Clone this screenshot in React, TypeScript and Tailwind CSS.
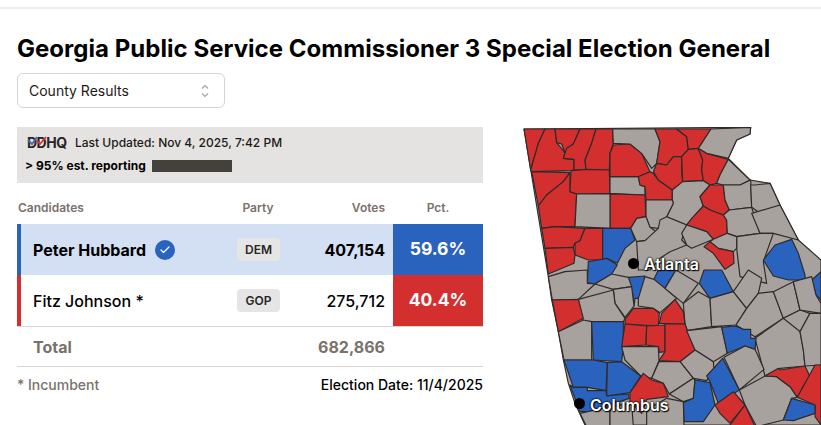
import { Check } from "lucide-react";

const RED = "#d32f2f";
const BLUE = "#2a63bd";
const GRAY = "#a8a29e";

// county shapes, traced in 3x picture units
const upper: [string, string][] = [
  [RED, "42,27 105,27 85,70 62,150"],
  [RED, "105,27 135,27 140,68 165,98 160,115 192,118 192,150 183,152 65,155 62,150 85,70"],
  [RED, "135,27 210,27 190,72 165,98 155,72 140,68"],
  [RED, "210,27 258,27 245,70 225,120 228,148 192,150 192,118 160,115 170,85 190,72"],
  [RED, "258,27 308,27 310,70 300,100 298,150 228,148 225,120 245,70"],
  [RED, "65,155 180,158 160,185 110,225 85,258"],
  [RED, "180,158 180,215 200,222 195,320 135,320 95,325 85,258 110,225 160,185"],
  [RED, "183,152 228,148 298,150 300,220 200,222 180,215"],
  [GRAY, "300,170 385,170 390,195 405,200 405,225 300,220"],
  [RED, "300,222 405,225 408,290 380,295 362,325 300,325"],
  [GRAY, "200,222 300,222 300,325 195,320"],
  [RED, "310,75 360,72 395,100 415,145 420,155 385,170 300,170 300,100"],
  [RED, "385,170 420,155 430,160 445,180 487,210 487,240 408,240 405,200 390,195"],
  [GRAY, "308,27 435,27 450,65 440,130 425,145 395,100 360,72 310,70"],
  [RED, "435,27 500,27 530,50 535,88 515,110 490,110 470,135 440,130 450,65"],
  [RED, "500,27 603,27 575,70 565,85 535,88 530,50"],
  [RED, "470,135 490,110 515,110 515,160 518,185 487,210 445,180 430,155 440,130"],
  [RED, "535,88 565,85 578,120 575,150 580,182 518,185 515,110"],
  [RED, "565,85 590,100 655,118 630,165 620,190 600,195 580,182 575,150 578,120"],
  [GRAY, "603,27 722,22 720,42 680,60 655,115 590,100 565,85 575,70"],
  [GRAY, "487,210 518,185 580,182 600,195 570,230 580,258 530,315 470,290 490,250 487,240"],
  [RED, "600,195 640,195 645,240 658,270 640,285 600,270 580,258 570,230"],
  [RED, "580,258 600,270 640,285 650,300 652,340 610,358 590,335 530,315 545,295"],
  [RED, "95,325 135,320 225,325 210,362 195,370 190,382 105,385"],
  [RED, "225,325 278,325 278,420 235,420 195,405 195,370 210,362"],
  [RED, "105,385 190,382 195,405 192,430 115,462"],
  [BLUE, "278,325 362,325 375,360 345,385 322,430 290,415 278,420"],
  [GRAY, "408,240 487,240 490,250 470,290 445,325 420,322 408,290"],
  [GRAY, "655,118 720,180 690,195 640,195 620,190 630,165"],
  [GRAY, "640,195 690,195 722,180 725,262 658,270 645,240"],
  [GRAY, "722,195 735,195 780,190 810,255 750,280 725,262"],
  [GRAY, "640,285 658,270 725,262 750,340 680,350 652,340 650,300"],
  [GRAY, "725,280 810,255 865,360 790,340 750,340"],
  [GRAY, "680,350 750,340 790,340 760,425 770,490 690,470 680,385"],
  [GRAY, "362,325 380,295 408,290 420,322 445,340 405,362 380,365"],
  [GRAY, "380,365 405,362 445,325 450,300 470,290 530,315 515,360 530,375 480,395 450,415 420,450 385,450"],
  [GRAY, "515,340 530,315 590,335 610,358 545,385 530,375"],
  [GRAY, "610,358 652,340 680,350 680,385 670,395 625,385 600,365"],
  [RED, "582,380 600,365 625,385 670,395 672,430 645,448 610,400"],
  [BLUE, "760,420 795,375 845,358 865,400 885,465 885,480 835,480 790,468"],
  [BLUE, "235,425 290,415 322,435 305,462 255,492 232,488"],
];

const lower: [string, string][] = [
  [BLUE, "355,22 405,18 405,50 385,85 375,85 372,108 368,70"],
  [BLUE, "432,28 445,0 498,0 465,55"],
  [BLUE, "568,40 582,0 635,0 670,65 600,85"],
  [BLUE, "905,30 933,5 933,90 918,75"],
  [GRAY, "115,20 165,5 232,0 232,40 255,42 205,88 127,90"],
  [GRAY, "255,42 305,12 355,22 365,50 310,58"],
  [GRAY, "310,58 365,50 372,108 345,142 315,100"],
  [GRAY, "205,88 310,60 315,100 345,145 340,155 220,155"],
  [GRAY, "385,85 405,20 432,28 465,55 500,85 495,90 450,128 430,115 385,108"],
  [GRAY, "465,55 498,0 565,40 520,100"],
  [GRAY, "520,100 565,65 600,85 605,170 530,182 525,162"],
  [GRAY, "600,85 670,65 710,115 678,165 605,170"],
  [GRAY, "670,65 715,0 755,25 745,70 710,115"],
  [GRAY, "710,115 745,70 790,65 820,145 735,200 678,165"],
  [GRAY, "790,65 850,35 870,120 820,145"],
  [GRAY, "820,145 870,120 900,130 870,185"],
  [GRAY, "850,35 905,20 918,75 933,100 933,130 870,120"],
  [GRAY, "735,205 820,145 870,185 880,240 885,288 810,295 765,318"],
  [GRAY, "870,185 900,130 933,130 933,285 885,288 880,240"],
  [RED, "127,90 205,88 220,145 145,185"],
  [GRAY, "145,185 220,150 245,155 245,270 162,270"],
  [BLUE, "245,155 340,155 340,228 335,275 250,270"],
  [RED, "345,148 370,115 430,115 448,130 445,168 345,162"],
  [RED, "448,160 455,130 495,88 520,125 525,162"],
  [RED, "345,162 410,168 408,225 335,230"],
  [RED, "410,168 465,165 465,245 448,247 445,230 408,225"],
  [RED, "465,162 525,162 555,240 510,275 447,272 465,245"],
  [GRAY, "335,230 445,230 447,272 425,325 392,318 345,270"],
  [GRAY, "530,182 635,170 652,250 610,275 555,240"],
  [BLUE, "635,172 675,168 700,178 722,178 722,205 738,205 735,238 705,228 652,250"],
  [GRAY, "642,262 705,228 735,238 762,298 688,360"],
  [GRAY, "510,275 555,240 610,275 612,298 590,332 550,325"],
  [GRAY, "447,275 510,275 550,325 478,372 460,340 425,325"],
  [BLUE, "590,318 638,265 688,360 625,400 600,335"],
  [BLUE, "162,270 250,270 292,278 288,362 232,352 190,352"],
  [BLUE, "292,278 335,275 392,318 360,368 290,378"],
  [BLUE, "190,352 232,352 232,362 288,362 290,378 355,372 358,385 240,425 210,425 180,345"],
  [RED, "360,368 400,310 425,330 460,340 475,380 410,388 395,430 360,395"],
  [GRAY, "478,372 550,325 555,330 550,385 520,395"],
  [BLUE, "555,330 600,338 615,405 580,455 522,455 520,398 550,385"],
  [GRAY, "688,360 765,318 800,320 842,352 862,382 845,385 820,450 740,470 705,405"],
  [RED, "615,405 670,365 705,405 660,460 630,430"],
  [RED, "660,465 705,405 735,470 660,470"],
  [RED, "765,318 805,295 810,300 885,288 900,320 885,340 862,382 842,352 800,320"],
  [RED, "885,340 915,285 933,285 933,465 915,440 915,405 862,382"],
  [BLUE, "820,450 845,385 915,405 915,430 850,452"],
  [GRAY, "210,430 300,410 300,470 230,470"],
  [GRAY, "300,410 365,400 370,470 300,470"],
  [GRAY, "410,420 470,385 520,395 522,470 410,470"],
];

function CountyMap() {
  return (
    <div className="relative w-[311px] h-[298px] shrink-0">
      <svg width="311" height="298" viewBox="0 21 933 894" className="block">
        <polygon
          fill={GRAY}
          stroke="#2e2a2a"
          strokeWidth="3.5"
          strokeLinejoin="round"
          points="42,27 722,22 720,42 680,60 655,115 720,180 780,190 810,255 865,360 933,420 933,915 660,915 225,915 195,850 175,790 160,720 145,635 125,540 115,470"
        />
        <g stroke="#2e2a2a" strokeWidth="3.5" strokeLinejoin="round">
          {upper.map(([fill, points], i) => (
            <polygon key={i} fill={fill} points={points} />
          ))}
          <g transform="translate(0 450)">
            {lower.map(([fill, points], i) => (
              <polygon key={i} fill={fill} points={points} />
            ))}
          </g>
        </g>
      </svg>
      <div className="absolute left-[118px] top-[131px] w-[11px] h-[11px] rounded-full bg-black" />
      <div className="absolute left-[134px] top-[127px] text-base leading-5 font-semibold text-white [text-shadow:0_0_2px_#000,0_0_2px_#000,1px_1px_1px_#000]">
        Atlanta
      </div>
      <div className="absolute left-[64px] top-[271px] w-[11px] h-[11px] rounded-full bg-black" />
      <div className="absolute left-[80px] top-[268px] text-base leading-5 font-semibold text-white [text-shadow:0_0_2px_#000,0_0_2px_#000,1px_1px_1px_#000]">
        Columbus
      </div>
    </div>
  );
}

function Row({ name, winner, party, votes, pct, bar, cell, bg }: { name: string; winner?: boolean; party: string; votes: string; pct: string; bar: string; cell: string; bg: string }) {
  return (
    <div className={`grid grid-cols-[212px_58px_106px_90px] items-stretch h-[51px] ${bg}`}>
      <div className={`flex items-center gap-[9px] border-l-4 pl-3 text-base ${bar} ${winner ? "font-bold" : "font-medium"}`}>
        {name}
        {winner && (
          <span className="flex items-center justify-center w-5 h-5 rounded-full bg-[#2a63bd]">
            <Check size={12} color="white" strokeWidth={2.5} />
          </span>
        )}
      </div>
      <div className="flex items-center justify-end pr-[7px]">
        <span className="flex items-center justify-center w-[43px] h-[23px] rounded-sm bg-[#e5e5e5] text-xs font-semibold text-[#292524]">
          {party}
        </span>
      </div>
      <div className={`flex items-center justify-end pr-2 text-base ${winner ? "font-bold" : "font-medium"}`}>{votes}</div>
      <div className={`flex items-center justify-center text-[17.5px] font-bold text-white ${cell}`}>{pct}</div>
    </div>
  );
}

export default function App() {
  return (
    <div className="h-[425px] overflow-hidden bg-white text-black font-['Inter',sans-serif]">
      <div className="h-[9px] border-b-2 border-[#eeeeee]" />
      <h1 className="ml-[17px] mt-[23px] text-2xl leading-[34px] font-bold whitespace-nowrap tracking-[0.03px]">
        Georgia Public Service Commissioner 3 Special Election General
      </h1>
      <div className="ml-[17px] mt-[7px] flex items-center justify-between w-[208px] h-[35px] pl-[11px] pr-[15px] border border-stone-300 rounded-md text-sm text-[#1c1917]">
        County Results
        <svg width="8" height="14" viewBox="0 0 8 14" fill="none" stroke="#a8a29e" strokeWidth="1.2">
          <path d="M1 4.5L4 1.5L7 4.5" />
          <path d="M1 9.5L4 12.5L7 9.5" />
        </svg>
      </div>
      <div className="flex mt-[19px] ml-[17px] gap-[27px]">
        <div className="w-[466px] shrink-0">
          <div className="h-14 bg-[#e5e3e1] px-2 pt-[7px]">
            <div className="flex items-center h-[18px] text-xs font-medium text-[#1c1917]">
              <span className="relative w-[50px] text-sm font-bold tracking-[-0.5px] text-[#292524]">
                <span className="ml-[2px]">DDHQ</span>
                <svg className="absolute left-[1px] top-[2px]" width="22" height="12" viewBox="0 0 22 12" fill="none">
                  <path d="M2 5l4 4 5-7" stroke="#3f6fae" strokeWidth="1.8" />
                  <path d="M10 5l4 4 6-7" stroke="#cc3a3a" strokeWidth="1.8" />
                </svg>
              </span>
              Last Updated: Nov 4, 2025, 7:42 PM
            </div>
            <div className="flex items-center gap-[6px] mt-[6px] text-xs font-bold">
              &gt; 95% est. reporting
              <div className="w-20 h-3 bg-[#44403c]" />
            </div>
          </div>
          <div className="grid grid-cols-[212px_58px_106px_90px] h-[41px] items-end pb-2 text-xs font-semibold text-stone-500">
            <div className="pl-px">Candidates</div>
            <div className="text-center">Party</div>
            <div className="text-right pr-2">Votes</div>
            <div className="text-center">Pct.</div>
          </div>
          <Row name="Peter Hubbard" winner party="DEM" votes="407,154" pct="59.6%" bar="border-[#2a63bd]" cell="bg-[#2a63bd]" bg="bg-[#d3dff2]" />
          <Row name="Fitz Johnson *" party="GOP" votes="275,712" pct="40.4%" bar="border-[#d32f2f]" cell="bg-[#d32f2f]" bg="bg-white" />
          <div className="grid grid-cols-[212px_58px_106px_90px] items-center h-[41px] border-y border-stone-300 text-base font-bold text-stone-500">
            <div className="pl-4">Total</div>
            <div />
            <div className="text-right pr-2">682,866</div>
          </div>
          <div className="flex items-center justify-between mt-[8px] text-sm font-medium">
            <span className="text-stone-500">* Incumbent</span>
            <span>Election Date: 11/4/2025</span>
          </div>
        </div>
        <CountyMap />
      </div>
    </div>
  );
}
